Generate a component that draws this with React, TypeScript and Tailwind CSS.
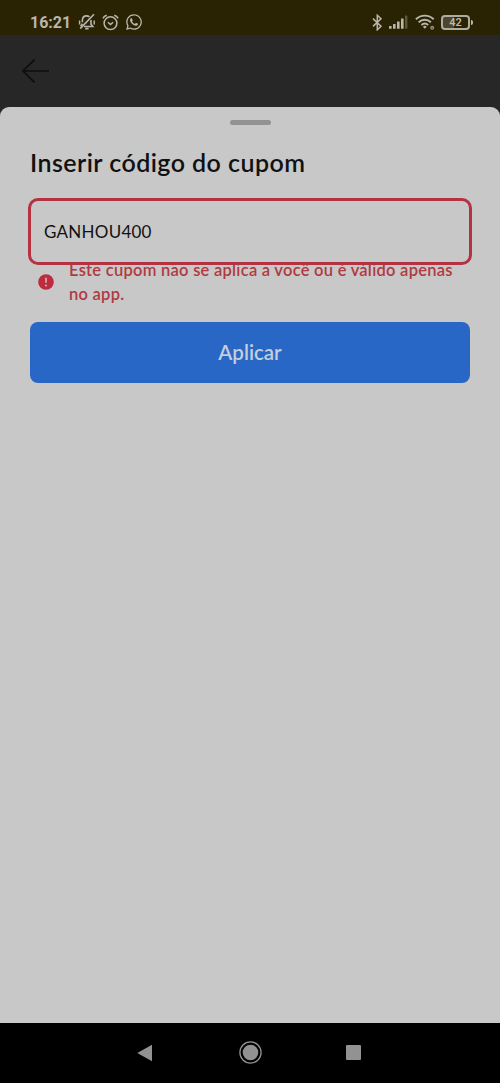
import { useState } from "react"
import { FaWhatsapp } from "react-icons/fa"

function BellOffIcon() {
  return (
    <svg width="18" height="18" viewBox="0 0 18 18" fill="none" stroke="currentColor" strokeWidth="1.6">
      <path d="M4.4 9.2V7.4C4.4 4.7 6 2.9 8.6 2.9c1.2 0 2 .3 2.8.9M13 7v4.2l1.8 2.3H6" />
      <path d="M4.4 10.8L2.6 13.4" />
      <path d="M7.2 15.6h3.4" strokeWidth="1.8" />
      <path d="M16 1.2L2.2 15.6" />
      <path d="M1.6 7.4v4.2M16.2 7.4v4.2" strokeWidth="1.4" />
    </svg>
  )
}

function AlarmIcon() {
  return (
    <svg width="17" height="17" viewBox="0 0 17 17" fill="none" stroke="currentColor" strokeWidth="1.5">
      <circle cx="8.5" cy="9.2" r="6.4" />
      <path d="M5.9 8.2l2.6 2.4 2.6-2.4" />
      <path d="M.9 4.3C1.7 2.7 3 1.7 4.8 1.2M16.1 4.3C15.3 2.7 14 1.7 12.2 1.2" />
    </svg>
  )
}

function BluetoothIcon() {
  return (
    <svg width="11" height="17" viewBox="0 0 11 17" fill="none" stroke="currentColor" strokeWidth="1.5">
      <path d="M1 4.6l8 7.6-3.7 3.5V1.3L9 4.8l-8 7.6" />
    </svg>
  )
}

function SignalIcon() {
  return (
    <svg width="19" height="14" viewBox="0 0 19 14" fill="currentColor">
      <rect x="0" y="11" width="2.6" height="2.8" rx="0.5" />
      <rect x="4" y="9" width="2.6" height="4.8" rx="0.5" />
      <rect x="8" y="6.5" width="2.6" height="7.3" rx="0.5" />
      <rect x="12" y="3.5" width="2.6" height="10.3" rx="0.5" />
      <rect x="16" y="0.5" width="2.4" height="13.3" rx="0.5" opacity="0.35" />
    </svg>
  )
}

function WifiIcon() {
  return (
    <svg width="20" height="16" viewBox="0 0 20 16" fill="none" stroke="currentColor" strokeWidth="1.9">
      <path d="M.9 5.2c5-4.8 12.8-4.8 17.8 0" />
      <path d="M3.7 8.2c3.5-3.3 8.7-3.3 12.2 0" />
      <path d="M6.4 11c2-1.9 4.8-1.9 6.8 0" />
      <path d="M7.9 12.7a2.8 2.8 0 0 1 3.8 0l-1.9 2.1z" fill="currentColor" stroke="none" />
      <circle cx="17.2" cy="13.8" r="1.3" strokeWidth="1.4" opacity="0.75" />
    </svg>
  )
}

function StatusBar() {
  return (
    <div className="flex h-[35px] items-start justify-between bg-[#292304] pt-[13px] pr-[29px] pl-[30px] text-[#b9b7ac]">
      <div className="flex h-[18px] items-center">
        <span className="w-[48px] pt-px font-[Roboto,sans-serif] text-[16px] leading-[18px] font-bold">16:21</span>
        <BellOffIcon />
        <span className="ml-[6px]">
          <AlarmIcon />
        </span>
        <FaWhatsapp className="ml-[6px] size-[18px]" />
      </div>
      <div className="flex h-[18px] items-center">
        <BluetoothIcon />
        <span className="ml-[6px]">
          <SignalIcon />
        </span>
        <span className="ml-[7px]">
          <WifiIcon />
        </span>
        <div className="ml-[6.5px] flex h-[15px] w-[29px] items-center justify-center rounded-[4px] border-2 border-[#aeaca0] bg-linear-to-r from-[#4b4630] from-42% to-transparent to-42% font-[Roboto,sans-serif] text-[11px] leading-none font-semibold">
          42
        </div>
        <div className="-mr-[2px] ml-px h-[5px] w-[2px] rounded-r-full bg-[#b9b7ac]" />
      </div>
    </div>
  )
}

function NavigationBar() {
  return (
    <nav className="flex h-[60.5px] items-center bg-black text-[#929292]">
      <button className="ml-[137px]" aria-label="Voltar">
        <svg width="15" height="18" viewBox="0 0 15 18" fill="currentColor">
          <path d="M15 .8v16.4L.3 9z" />
        </svg>
      </button>
      <button className="ml-[87px]" aria-label="Início">
        <svg width="23" height="23" viewBox="0 0 23 23" fill="currentColor">
          <circle cx="11.5" cy="11.5" r="10.6" fill="none" stroke="currentColor" strokeWidth="1.3" />
          <circle cx="11.5" cy="11.5" r="7.8" />
        </svg>
      </button>
      <button className="ml-[84px] size-[15px] rounded-[1px] bg-current" aria-label="Recentes" />
    </nav>
  )
}

export default function App() {
  const [code, setCode] = useState("GANHOU400")

  return (
    <div className="flex h-[1083px] w-[500px] flex-col bg-[#272727] font-[Lato,sans-serif]">
      <StatusBar />

      <header className="h-[71.5px] pt-[24px] pl-[22px]">
        <svg width="28" height="24" viewBox="0 0 28 24" fill="none" stroke="#0e0e0e" strokeWidth="1.7">
          <path d="M27 12H1M12.5.7L1 12l11.5 11.3" />
        </svg>
      </header>

      <main className="flex flex-1 flex-col rounded-t-[9px] bg-[#c8c8c8] px-[28px]">
        <div className="mt-[13px] h-[5px] w-[41px] self-center rounded-full bg-[#929292]" />

        <h1 className="mt-[21px] ml-[2px] text-[25px] leading-[32px] font-semibold tracking-[0.45px] whitespace-nowrap text-[#111]">
          Inserir código do cupom
        </h1>

        <input
          className="relative z-10 mt-[20px] h-[67px] rounded-[10px] border-3 border-[#b53242] bg-[#c8c8c8] px-[13px] text-[17px] tracking-[0.25px] text-[#111] outline-none"
          value={code}
          onChange={(e) => setCode(e.target.value)}
          aria-label="Código do cupom"
        />

        <div className="-mt-[6.5px] flex items-center pl-[10px]">
          <svg className="shrink-0" width="16" height="16" viewBox="0 0 16 16">
            <circle cx="8" cy="8" r="7.8" fill="#bd2b3e" />
            <path d="M8 3.8v5" stroke="#d6b5b9" strokeWidth="1.6" />
            <circle cx="8" cy="11.4" r="1" fill="#d6b5b9" />
          </svg>
          <p className="ml-[15px] text-[16.5px] leading-[24px] font-semibold tracking-[0.26px] whitespace-nowrap text-[#b03a40]">
            Este cupom não se aplica a você ou é válido apenas
            <br />
            no app.
          </p>
        </div>

        <button className="mx-[2px] mt-[15.5px] h-[61px] rounded-[8px] bg-[#2867c5] text-[20.5px] font-semibold text-[#c6cddb]">
          Aplicar
        </button>
      </main>

      <NavigationBar />
    </div>
  )
}
